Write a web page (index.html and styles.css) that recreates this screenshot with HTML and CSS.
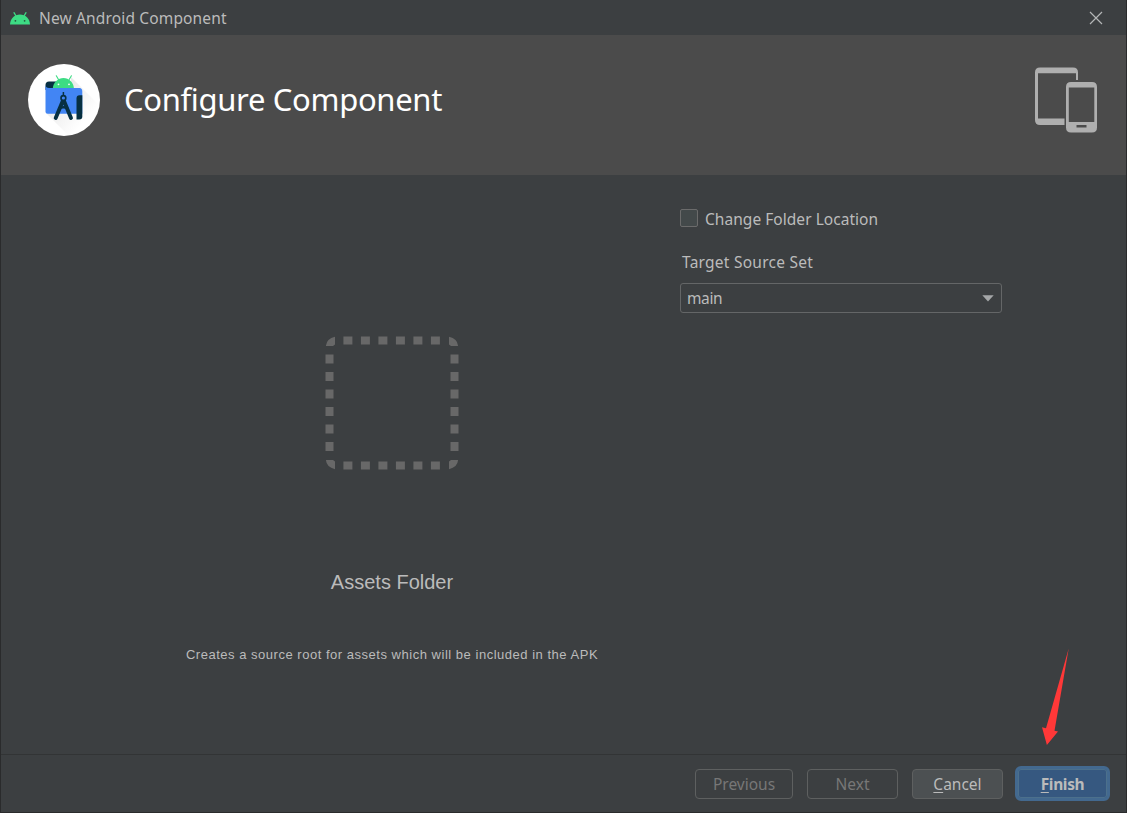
FILE: index.html
```html
<!DOCTYPE html>
<html lang="en">
<head>
<meta charset="utf-8">
<title>New Android Component</title>
<link rel="stylesheet" href="styles.css">
</head>
<body>
<div class="window">
  <div class="titlebar">
    <svg class="droid" width="20" height="13" viewBox="0 0 20 13"><path d="M4 .7 6 4M16 .7 14 4" stroke="#3ddc84" stroke-width="1.300" stroke-linecap="round"/><path d="M0 12.6C.3 6.500 4.500 2.600 10 2.600S19.700 6.500 20 12.600Z" fill="#3ddc84"/><circle cx="5.400" cy="8.800" r=".9" fill="#26593f"/><circle cx="14.600" cy="8.800" r=".9" fill="#26593f"/></svg>
    <span class="window-title">New Android Component</span>
    <svg class="close" width="14" height="14" viewBox="0 0 14 14"><path d="M1 1 13 13M13 1 1 13" stroke="#b4b6b7" stroke-width="1.2"/></svg>
  </div>
  <header class="header">
    <svg class="logo" width="72" height="72" viewBox="0 0 72 72">
      <defs><linearGradient id="shade" x1="0" y1="0" x2="1" y2="1"><stop offset="0" stop-color="#dedede"/><stop offset=".75" stop-color="#fff"/></linearGradient></defs>
      <circle cx="36" cy="36" r="36" fill="#fff"/>
      <path d="M43 13 70 40A36 36 0 0 1 40 71L19 50 43 30Z" fill="url(#shade)"/>
      <path d="M21 17.500H28V26H17.500V21Q17.500 17.500 21 17.500Z" fill="#073042"/>
      <path d="M28.300 11.800 30.500 15.500M43.400 11.800 41.200 15.500" stroke="#3ddc84" stroke-width="1.100" stroke-linecap="round"/>
      <path d="M24.700 25C25.200 18 30 14 35.500 14S45.500 18 46 25Z" fill="#3ddc84"/>
      <circle cx="30.500" cy="20.300" r=".9" fill="#fff"/><circle cx="41" cy="20.300" r=".9" fill="#fff"/>
      <path d="M17.500 21Q17.700 24 21 24H51.500Q54.300 24 54.300 27.500V49.700H19.500Q17.500 49.700 17.500 47.700Z" fill="#4285f4"/>
      <path d="M48.500 55V34.500Q48.500 31.200 51.500 31.200H54.300V52.500Q54.300 55.400 51.300 55.400H48.500Z" fill="#073042"/>
      <path d="M35.400 28V32" stroke="#073042" stroke-width="1.500"/>
      <path d="M35 36.500 27.700 54M35.800 36.500 43 54" stroke="#073042" stroke-width="3.900" stroke-linecap="round"/>
      <path d="M30.500 45Q35.400 41.500 40.300 45" stroke="#073042" stroke-width="2.500" fill="none"/>
      <circle cx="35.400" cy="34" r="2.400" fill="#4285f4" stroke="#073042" stroke-width="1.600"/>
    </svg>
    <h1 class="heading">Configure Component</h1>
    <svg class="devices" width="62" height="66" viewBox="0 0 62 66" fill="#afafaf">
      <path fill-rule="evenodd" d="M5 .500H38Q43 .500 43 5.500V13H41V6.300H3V51.500H29.500V58H5Q0 58 0 53V5.500Q0 .500 5 .500Z"/>
      <path fill-rule="evenodd" d="M36 15H57Q62 15 62 20V60.500Q62 65.500 57 65.500H36Q31 65.500 31 60.500V20Q31 15 36 15ZM33.800 20.500V55H59.300V20.500ZM41.500 58V60.500H51.500V58Z"/>
    </svg>
  </header>
  <main class="content">
    <section class="preview">
      <svg class="placeholder" width="134" height="134" viewBox="0 0 134 134" fill="#686868">
        <path d="M1 9.500Q1.500 3 10 .800V8.500L8 10H1ZM133 9.500Q132.500 3 124 .800V8.500L126 10H133ZM1 124.500Q1.500 131 10 133.200V125.500L8 124H1ZM133 124.500Q132.500 131 124 133.200V125.500L126 124H133Z"/>
        <path d="M18.400 4.600H116M18.400 129.500H116" stroke="#686868" stroke-width="8" stroke-dasharray="9 8.500"/>
        <path d="M4.500 18.400V116M129.500 18.400V116" stroke="#686868" stroke-width="8" stroke-dasharray="9 8.500"/>
      </svg>
      <h2 class="component-name">Assets Folder</h2>
      <p class="description">Creates a source root for assets which will be included in the APK</p>
    </section>
    <section class="form">
      <label class="check-row"><span class="checkbox"></span><span class="check-label">Change Folder Location</span></label>
      <div class="field-label"><span>Target Source Set</span></div>
      <div class="select"><span class="select-value">main</span><svg width="12" height="7" viewBox="0 0 12 7"><path d="M.300.300H11.700L6 6.600Z" fill="#a5a7a8"/></svg></div>
    </section>
  </main>
  <footer class="footer">
    <div class="button previous disabled"><span>Previous</span></div>
    <div class="button next disabled"><span>Next</span></div>
    <div class="button cancel"><span><u>C</u>ancel</span></div>
    <div class="button finish"><span><u>F</u>inish</span></div>
  </footer>
  <svg class="arrow" width="28" height="98" viewBox="0 0 28 98"><path d="M26.700.500 12.500 82.800 16 83.600 4.900 96.900 0 79.300 4 80.300Z" fill="#ff3838"/></svg>
</div>
</body>
</html>
```
FILE: styles.css
```css
* { box-sizing: border-box; }
body { margin: 0; background: #3c3f41; }
.window {
  position: relative;
  display: flex;
  flex-direction: column;
  width: 1127px;
  height: 813px;
  border: 1px solid #2a2b2c;
  border-top: 0;
  background: #3c3f41;
  color: #bbbbbb;
  font: 15.5px/20px "Noto Sans", "Open Sans", sans-serif;
  overflow: hidden;
  white-space: nowrap;
}
.titlebar { display: flex; align-items: center; height: 35px; padding: 0 23px 0 9px; }
.droid { margin-top: 2px; }
.window-title { margin: 1px 0 0 9px; letter-spacing: 0.15px; }
.close { margin: 1px 0 0 auto; }
.header { display: flex; height: 140px; padding: 29px 29px 0 27px; background: #4b4b4b; }
.heading { margin: 13px 0 0 24px; color: #fff; font-size: 31px; line-height: 44px; font-weight: 400; letter-spacing: -0.33px; }
.devices { margin: 3px 0 0 auto; }
.content { display: flex; flex: 1; }
.preview { display: flex; flex-direction: column; align-items: center; width: 678px; padding: 161px 0 0 104px; font-family: "Liberation Sans", Arial, sans-serif; }
.component-name { margin: 98px 0 0; font-size: 20px; line-height: 28px; font-weight: 400; }
.description { margin: 49px 0 0; font-size: 13px; letter-spacing: 0.52px; }
.form { padding-top: 34px; }
.check-row { display: flex; align-items: flex-start; height: 43px; letter-spacing: 0.04px; }
.checkbox { width: 18px; height: 18px; margin: 0 7px 0 1px; border: 1px solid #6b6b6b; border-radius: 2px; background: #43494a; }
.field-label { height: 30px; padding-left: 3px; letter-spacing: 0.25px; }
.select { display: flex; align-items: center; justify-content: space-between; width: 322px; height: 30px; margin: 1px 0 0 1px; padding: 0 7px 0 6px; border: 1px solid #646667; border-radius: 3px; }
.select-value { letter-spacing: -0.4px; }
.footer { display: flex; justify-content: flex-end; align-items: flex-start; height: 58px; padding: 14px 16px 0 0; border-top: 1px solid #323435; }
.button { display: flex; align-items: center; justify-content: center; height: 30px; border: 1px solid #5e6060; border-radius: 4px; color: #bbbbbb; }
.disabled { color: #777777; }
.previous { width: 98px; margin-right: 14px; }
.next { width: 91px; margin-right: 14px; }
.cancel { width: 91px; margin-right: 12px; background: #4c5052; }
.finish { width: 95px; height: 35px; margin-top: -3px; border: 3px solid #43698f; border-radius: 6px; background: #365880; box-shadow: inset 0 0 0 1px #4c708c; font-weight: 700; letter-spacing: -0.35px; }
u { text-underline-offset: 2px; text-decoration-thickness: 1px; }
.arrow { position: absolute; left: 1041px; top: 648px; }
```
